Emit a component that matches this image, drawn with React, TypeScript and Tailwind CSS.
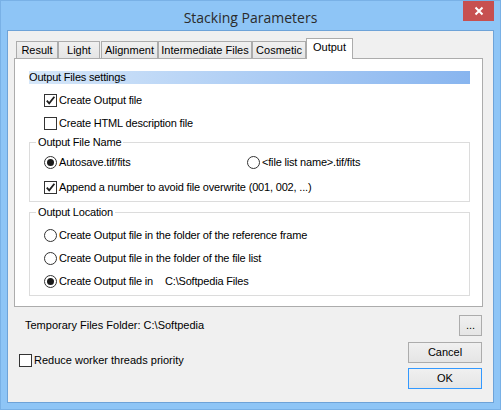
import React from "react";

const F = "font-['Liberation_Sans',Arial,sans-serif]";

function Check({ checked }: { checked: boolean }) {
  return (
    <span className="w-[13px] h-[13px] border border-[#333333] bg-white flex items-center justify-center shrink-0">
      {checked && (
        <svg width="11" height="11" viewBox="0 0 11 11">
          <path d="M1.8 5.6 L4.2 8.3 L9.4 1.8" stroke="#1e1e1e" strokeWidth="1.8" fill="none" />
        </svg>
      )}
    </span>
  );
}

function Radio({ selected }: { selected: boolean }) {
  return (
    <span className="w-[13px] h-[13px] rounded-full border border-[#333333] bg-white flex items-center justify-center shrink-0">
      {selected && <span className="w-[7px] h-[7px] rounded-full bg-[#1a1a1a]" />}
    </span>
  );
}

function Row({ children, className = "" }: { children: React.ReactNode; className?: string }) {
  return <div className={`h-[13px] flex items-center ${className}`}>{children}</div>;
}

function Label({ children }: { children: React.ReactNode }) {
  return <span className="ml-[2px] whitespace-nowrap leading-[13px]">{children}</span>;
}

const tabs = [
  { name: "Result", w: "w-[42px]", ml: "ml-[2px]" },
  { name: "Light", w: "w-[42px]", ml: "ml-0" },
  { name: "Alignment", w: "w-[57px]", ml: "ml-[1px]" },
  { name: "Intermediate Files", w: "w-[94px]", ml: "ml-0" },
  { name: "Cosmetic", w: "w-[54px]", ml: "ml-0" },
];

function Btn({ children, w, primary = false }: { children: React.ReactNode; w: string; primary?: boolean }) {
  return (
    <div
      className={`${w} h-[21px] flex items-center justify-center border ${
        primary ? "border-[#3399ff]" : "border-[#acacac]"
      } bg-gradient-to-b from-[#f0f0f0] to-[#e5e5e5] text-black`}
    >
      {children}
    </div>
  );
}

export default function App() {
  return (
    <div className={`w-[501px] h-[410px] bg-[#8ec5f6] border border-[#79b1e6] box-border flex flex-col relative ${F} text-[11px] text-black overflow-hidden`}>
      <div className="h-[29px] flex items-center justify-center">
        <span className="font-['Open_Sans',sans-serif] text-[14px] text-[#2b2b2b] mt-[3px]">Stacking Parameters</span>
      </div>
      <div className="absolute top-0 right-[6px] w-[31px] h-[20px] bg-[#c75050] flex items-center justify-center">
        <svg width="10" height="10" viewBox="0 0 10 10">
          <path d="M1.5 1.5 L8.5 8.5 M8.5 1.5 L1.5 8.5" stroke="white" strokeWidth="2" />
        </svg>
      </div>
      <div className="mx-[6px] mb-[6px] flex-1 border border-[#6ea3d8] bg-[#f0f0f0] pt-[7px] pl-[6px]">
        {/* tabs */}
        <div className="h-[20px] flex items-end">
          {tabs.map((t) => (
            <div
              key={t.name}
              className={`${t.w} ${t.ml} h-[17px] border border-b-0 border-[#acacac] bg-gradient-to-b from-[#f0f0f0] to-[#e5e5e5] flex items-center justify-center whitespace-nowrap`}
            >
              {t.name}
            </div>
          ))}
          <div className="w-[47px] h-[21px] -mb-px relative z-10 border border-b-0 border-[#acacac] bg-white flex items-center justify-center pb-[3px]">
            Output
          </div>
        </div>
        {/* panel */}
        <div className="w-[469px] h-[249px] border border-[#acacac] bg-white flex flex-col tracking-[-0.18px]">
          <div className="ml-[14px] mt-[12px] w-[441px] h-[13px] bg-gradient-to-r from-[#d6e7f9] to-[#88b5ef] flex items-center leading-[13px]">
            Output Files settings
          </div>
          <Row className="mt-[10px] pl-[29px]">
            <Check checked />
            <Label>Create Output file</Label>
          </Row>
          <Row className="mt-[10px] pl-[29px]">
            <Check checked={false} />
            <Label>Create HTML description file</Label>
          </Row>
          {/* group 1 */}
          <div className="relative ml-[14px] mt-[12px] w-[441px] h-[60px] border border-[#dcdcdc] pl-[14px] pt-[13px]">
            <span className="absolute -top-[8px] left-[6px] px-[2px] bg-white leading-[14px]">Output File Name</span>
            <Row>
              <div className="w-[203px] flex items-center">
                <Radio selected />
                <Label>Autosave.tif/fits</Label>
              </div>
              <Radio selected={false} />
              <Label>&lt;file list name&gt;.tif/fits</Label>
            </Row>
            <Row className="mt-[12px]">
              <Check checked />
              <Label>Append a number to avoid file overwrite (001, 002, ...)</Label>
            </Row>
          </div>
          {/* group 2 */}
          <div className="relative ml-[14px] mt-[10px] w-[441px] h-[84px] border border-[#dcdcdc] pl-[14px] pt-[16px]">
            <span className="absolute -top-[8px] left-[6px] px-[2px] bg-white leading-[14px]">Output Location</span>
            <Row>
              <Radio selected={false} />
              <Label>Create Output file in the folder of the reference frame</Label>
            </Row>
            <Row className="mt-[10px]">
              <Radio selected={false} />
              <Label>Create Output file in the folder of the file list</Label>
            </Row>
            <Row className="mt-[10px]">
              <Radio selected />
              <span className="ml-[2px] w-[106px] whitespace-nowrap">Create Output file in</span>
              <span className="whitespace-nowrap">C:\Softpedia Files</span>
            </Row>
          </div>
        </div>
        {/* bottom */}
        <div className="w-[469px]">
          <div className="mt-[8px] h-[21px] flex items-center justify-between">
            <span className="ml-[11px]">Temporary Files Folder: C:\Softpedia</span>
            <div className="mr-[1px]">
              <Btn w="w-[23px]">...</Btn>
            </div>
          </div>
          <div className="mt-[6px] flex justify-between items-start">
            <div className="ml-[5px] mt-[12px] flex items-center h-[13px]">
              <Check checked={false} />
              <Label>Reduce worker threads priority</Label>
            </div>
            <div className="mr-[1px] flex flex-col gap-[5px]">
              <Btn w="w-[74px]">Cancel</Btn>
              <Btn w="w-[74px]" primary>
                OK
              </Btn>
            </div>
          </div>
        </div>
      </div>
    </div>
  );
}
